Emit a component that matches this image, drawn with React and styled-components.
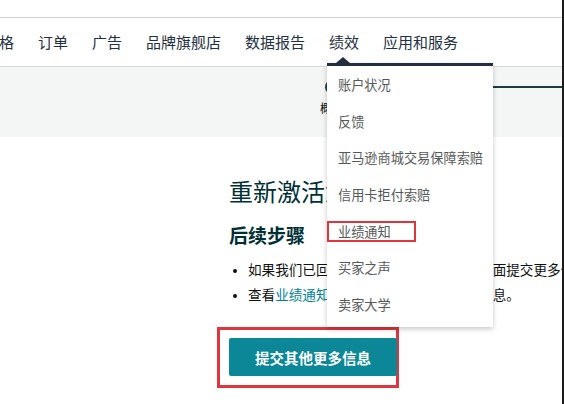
import React from 'react';
import styled, { createGlobalStyle } from 'styled-components';

const GlobalStyle = createGlobalStyle`
  html, body {
    margin: 0;
    padding: 0;
    background: #fff;
  }
  body {
    font-family: 'Noto Sans CJK SC', 'Noto Sans', sans-serif;
    color: #0f1111;
  }
`;

const Page = styled.div`
  position: relative;
  width: 562px;
  height: 404px;
  overflow: hidden;
  border-right: 2px solid #1b1b1b;
  background: #fff;
`;

const TopStrip = styled.div`
  height: 17px;
  border-bottom: 1px solid #cfd2d3;
`;

const Nav = styled.nav`
  display: flex;
  align-items: center;
  gap: 24px;
  height: 48px;
  margin-left: -16px;
  border-bottom: 1px solid #d5d9d9;
`;

const NavItem = styled.span`
  font-size: 15px;
  line-height: 20px;
  color: #232f3e;
  white-space: nowrap;
`;

const Band = styled.div`
  display: flex;
  height: 70px;
  background: #f4f5f5;
  padding-left: 316px;
  padding-top: 13px;
  box-sizing: border-box;
`;

const Step = styled.div`
  display: flex;
  flex-direction: column;
  align-items: center;
  width: 32px;
`;

const StepDot = styled.div`
  width: 14px;
  height: 14px;
  border-radius: 50%;
  border: 2px solid #1d3c40;
  box-sizing: border-box;
  background: #fff;
`;

const StepLabel = styled.div`
  font-size: 12px;
  line-height: 16px;
  margin-top: 6px;
  color: #0f1111;
`;

const StepLine = styled.div`
  flex: 1;
  height: 2px;
  margin-top: 6px;
  background: #1d3c40;
`;

const Content = styled.main`
  padding: 38px 0 0 229px;
`;

const Title = styled.h1`
  margin: 0;
  font-size: 24px;
  line-height: 32px;
  font-weight: 400;
  color: #002f36;
`;

const SubTitle = styled.h2`
  margin: 15px 0 0;
  font-size: 19px;
  line-height: 26px;
  font-weight: 700;
  color: #002f36;
`;

const List = styled.ul`
  margin: 9px 0 0;
  padding-left: 19px;
  width: 400px;
`;

const ListItem = styled.li`
  font-size: 13.6px;
  line-height: 25px;
  white-space: nowrap;
  color: #0f1111;

  &::marker {
    font-size: 11px;
  }
`;

const Link = styled.a`
  color: #008296;
  text-decoration: none;
`;

const RedFrame = styled.div`
  display: inline-flex;
  margin: 20px 0 0 -12px;
  padding: 8px 0 9px 9px;
  border: 3px solid #e0353d;
`;

const Button = styled.button`
  width: 168px;
  height: 38px;
  margin-right: -1px;
  border: none;
  border-radius: 2px;
  background: #0b8797;
  color: #fff;
  font-family: inherit;
  font-size: 14.5px;
  font-weight: 700;
`;

const Dropdown = styled.div`
  position: absolute;
  left: 327px;
  top: 63px;
  width: 166px;
  height: 264px;
  box-sizing: border-box;
  border-top: 3px solid #232f3e;
  background: #fff;
  box-shadow: 0 2px 5px rgba(0, 0, 0, 0.22);

  &::before {
    content: '';
    position: absolute;
    left: 9px;
    top: -9px;
    border-left: 7px solid transparent;
    border-right: 7px solid transparent;
    border-bottom: 6px solid #232f3e;
  }
`;

const MenuItem = styled.div`
  height: 36.7px;
  display: flex;
  align-items: center;
  padding-left: 11px;
  font-size: 13.2px;
  color: #565959;
  white-space: nowrap;
`;

const Marked = styled.span`
  display: inline-block;
  margin-left: -11px;
  padding: 0 23px 0 9px;
  line-height: 17px;
  border: 2px solid #e0353d;
`;

const navItems = ['价格', '订单', '广告', '品牌旗舰店', '数据报告', '绩效', '应用和服务'];

const menuItems = [
  '账户状况',
  '反馈',
  '亚马逊商城交易保障索赔',
  '信用卡拒付索赔',
  '业绩通知',
  '买家之声',
  '卖家大学',
];

const App = () => (
  <Page>
    <GlobalStyle />
    <TopStrip />
    <Nav>
      {navItems.map((item) => (
        <NavItem key={item}>{item}</NavItem>
      ))}
    </Nav>
    <Band>
      <Step>
        <StepDot />
        <StepLabel>概览</StepLabel>
      </Step>
      <StepLine />
    </Band>
    <Content>
      <Title>重新激活您的销售权限</Title>
      <SubTitle>后续步骤</SubTitle>
      <List>
        <ListItem>如果我们已回复并要求更多信息，请在下面提交更多信息。</ListItem>
        <ListItem>
          查看<Link href="#">业绩通知</Link>，了解有关您需要提供的信息。
        </ListItem>
      </List>
      <RedFrame>
        <Button>提交其他更多信息</Button>
      </RedFrame>
    </Content>
    <Dropdown>
      {menuItems.map((item) => (
        <MenuItem key={item}>
          {item === '业绩通知' ? <Marked>{item}</Marked> : item}
        </MenuItem>
      ))}
    </Dropdown>
  </Page>
);

export default App;
